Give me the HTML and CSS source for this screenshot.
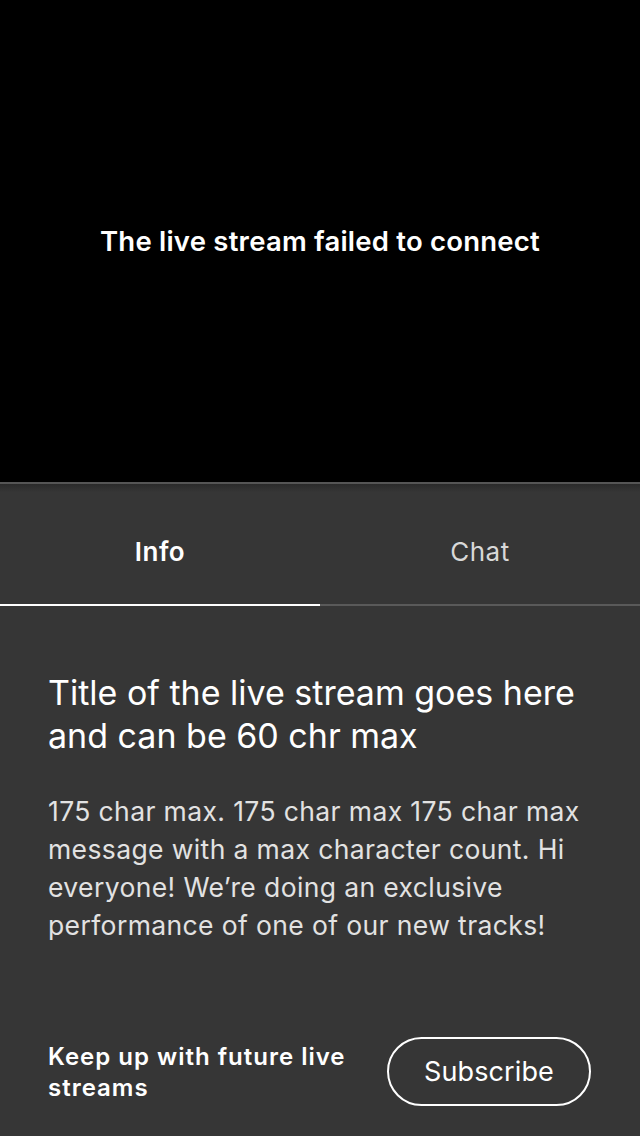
FILE: index.html
```html
<!DOCTYPE html>
<html>
<head>
<meta charset="utf-8">
<link rel="stylesheet" href="styles.css">
</head>
<body>
<div class="page">
  <div class="video">
    <p class="error">The live stream failed to connect</p>
  </div>
  <div class="panel">
    <div class="tabs">
      <div class="tab active">Info</div>
      <div class="tab">Chat</div>
    </div>
    <div class="content">
      <h1 class="title">Title of the live stream goes here and can be 60 chr max</h1>
      <p class="desc">175 char max. 175 char max 175 char max message with a max character count. Hi everyone! We’re doing an exclusive performance of one of our new tracks!</p>
    </div>
    <div class="footer">
      <p class="keep">Keep up with future live streams</p>
      <button class="subscribe">Subscribe</button>
    </div>
  </div>
</div>
</body>
</html>
```
FILE: styles.css
```css
* { box-sizing: border-box; }
html, body { margin: 0; padding: 0; }
body {
  width: 640px;
  height: 1136px;
  background: #363636;
  font-family: Inter, "Noto Sans", sans-serif;
  color: #fff;
  overflow: hidden;
}
.page {
  display: flex;
  flex-direction: column;
  height: 1136px;
}
.video {
  height: 482px;
  background: #000;
  display: flex;
  align-items: center;
  justify-content: center;
}
.error {
  margin: 0;
  font-size: 27.5px;
  font-weight: 600;
  letter-spacing: 0.22px;
}
.panel {
  flex: 1;
  display: flex;
  flex-direction: column;
  border-top: 2px solid #555;
  background: linear-gradient(#2a2a2a 0, #363636 8px);
}
.tabs {
  display: flex;
  height: 122px;
}
.tab {
  flex: 1;
  display: flex;
  align-items: center;
  justify-content: center;
  font-size: 26px;
  letter-spacing: 0.5px;
  color: #d8d8d8;
  border-bottom: 2px solid #5a5a5a;
  padding-top: 14px;
}
.tab.active {
  color: #fff;
  font-weight: 600;
  border-bottom-color: #fff;
}
.content {
  padding: 65px 48px 0 48px;
}
.title {
  margin: 0;
  font-size: 34px;
  font-weight: 400;
  line-height: 43px;
  letter-spacing: 0;
}
.desc {
  margin: 35px 0 0 0;
  font-size: 26.5px;
  line-height: 38px;
  letter-spacing: 0.38px;
  color: #e2e2e2;
}
.footer {
  margin-top: auto;
  display: flex;
  align-items: center;
  justify-content: space-between;
  padding: 0 48px 30px 48px;
}
.keep {
  margin: 0;
  width: 320px;
  font-size: 24px;
  font-weight: 600;
  line-height: 31px;
  letter-spacing: 1px;
}
.subscribe {
  width: 204px;
  height: 69px;
  border: 2px solid #fff;
  border-radius: 35px;
  background: transparent;
  color: #fff;
  font-family: Inter, "Noto Sans", sans-serif;
  font-size: 27px;
  letter-spacing: 0.1px;
  margin-right: 1px;
}
```
